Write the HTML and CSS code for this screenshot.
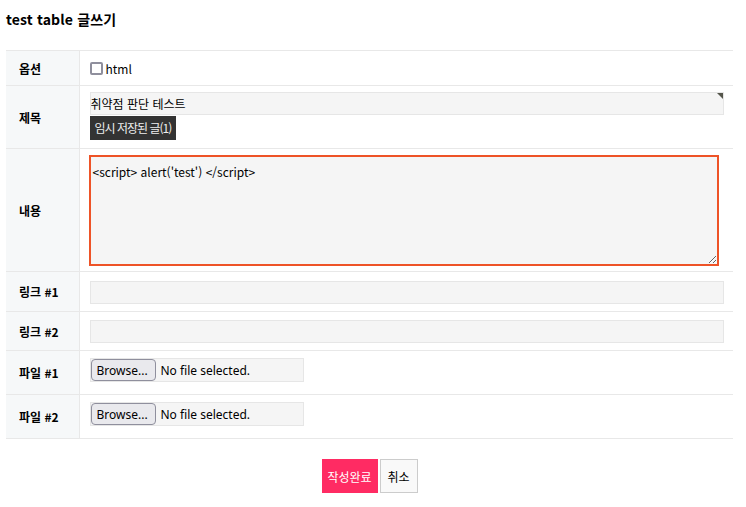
FILE: index.html
```html
<!DOCTYPE html>
<html lang="ko">
<head>
<meta charset="utf-8">
<title>test table 글쓰기</title>
<link rel="stylesheet" href="styles.css">
</head>
<body>
<div class="page">
  <h2 class="page-title">test table 글쓰기</h2>
  <form class="write-form">
    <table class="form-table">
      <tbody>
        <tr class="row-option">
          <th>옵션</th>
          <td>
            <label class="check-label"><input type="checkbox" class="check"><span>html</span></label>
          </td>
        </tr>
        <tr class="row-subject">
          <th>제목</th>
          <td>
            <div class="subject-wrap">
              <input type="text" class="text-input subject-input" value="취약점 판단 테스트">
              <span class="corner"></span>
            </div>
            <div class="autosave">임시 저장된 글(1)</div>
          </td>
        </tr>
        <tr class="row-content">
          <th>내용</th>
          <td>
            <textarea class="content-area">&lt;script&gt; alert('test') &lt;/script&gt;</textarea>
          </td>
        </tr>
        <tr class="row-link1">
          <th>링크 #1</th>
          <td><input type="text" class="text-input"></td>
        </tr>
        <tr class="row-link2">
          <th>링크 #2</th>
          <td><input type="text" class="text-input"></td>
        </tr>
        <tr class="row-file">
          <th>파일 #1</th>
          <td>
            <div class="file-box"><span class="file-btn">Browse...</span><span class="file-name">No file selected.</span></div>
          </td>
        </tr>
        <tr class="row-file">
          <th>파일 #2</th>
          <td>
            <div class="file-box"><span class="file-btn">Browse...</span><span class="file-name">No file selected.</span></div>
          </td>
        </tr>
      </tbody>
    </table>
    <div class="actions">
      <button type="button" class="btn-submit">작성완료</button>
      <button type="button" class="btn-cancel">취소</button>
    </div>
  </form>
</div>
</body>
</html>
```

FILE: styles.css
```css
* { box-sizing: border-box; }

html, body {
  margin: 0;
  padding: 0;
  background: #fff;
}

body {
  font-family: "Noto Sans CJK KR", "Noto Sans", sans-serif;
  font-size: 12px;
  color: #000;
}

.page {
  width: 727px;
  margin-left: 6px;
}

.page-title {
  margin: 0;
  padding-top: 8px;
  height: 50px;
  font-size: 14px;
  line-height: 22px;
  font-weight: 700;
  color: #000;
  letter-spacing: 0.15px;
}

.form-table {
  width: 727px;
  table-layout: fixed;
  border-collapse: collapse;
  border-top: 1px solid #e8e8e8;
}

.form-table tr {
  border-bottom: 1px solid #e8e8e8;
}

.form-table th {
  width: 73px;
  background: #f6f8f9;
  border-right: 1px solid #e8e8e8;
  text-align: left;
  padding: 0 0 0 13px;
  font-size: 12px;
  font-weight: 700;
  vertical-align: middle;
}

.form-table td {
  padding: 0 10px;
  vertical-align: middle;
}

.row-option td { height: 35px; }
.row-subject td { padding-top: 6px; padding-bottom: 8px; }
.row-content td { padding-top: 6px; padding-bottom: 5px; }
.row-link1 td { padding-top: 9px; padding-bottom: 7px; }
.row-link2 td { padding-top: 8px; padding-bottom: 7px; }
.row-file td { padding-top: 7px; padding-bottom: 12px; }

.check-label {
  display: flex;
  align-items: center;
  line-height: 19px;
  font-size: 12px;
}

.check {
  appearance: none;
  -webkit-appearance: none;
  margin: 0 3px 0 0;
  width: 13px;
  height: 13px;
  border: 2px solid #8f8f9d;
  border-radius: 2px;
  background: #fff;
}

.text-input {
  display: block;
  width: 634px;
  height: 23px;
  margin: 0;
  padding: 0 1px;
  border: 1px solid #e6e6e6;
  background: #f5f5f5;
  font: inherit;
  font-size: 12px;
  color: #000;
  outline: none;
}

.subject-input {
  padding: 0;
}

.subject-wrap {
  position: relative;
  width: 634px;
}

.corner {
  position: absolute;
  top: 1px;
  right: 1px;
  width: 0;
  height: 0;
  border-top: 6px solid #55564c;
  border-left: 6px solid transparent;
}

.autosave {
  display: inline-block;
  margin-top: 1px;
  padding: 0 5px;
  height: 24px;
  line-height: 24px;
  background: #333;
  color: #eee;
  font-size: 12px;
  letter-spacing: -1px;
}

.content-area {
  display: block;
  width: 630px;
  height: 111px;
  margin: 0 0 0 -1px;
  padding: 6px 2px;
  border: 2px solid #ee5327;
  background: #f5f5f5;
  font: inherit;
  font-size: 12px;
  line-height: 17px;
  color: #000;
  outline: none;
  resize: vertical;
}

.file-box {
  display: flex;
  align-items: center;
  width: 214px;
  height: 24px;
  border: 1px solid #e6e6e6;
  background: #f5f5f5;
  font-family: "Noto Sans", sans-serif;
  font-size: 12px;
}

.file-btn {
  display: inline-flex;
  align-items: center;
  width: 65px;
  height: 22px;
  padding: 0 5px;
  margin-right: 5px;
  border: 1px solid #8f8f9d;
  border-radius: 4px;
  background: #e9e9ed;
  color: #000;
}

.file-name {
  color: #000;
}

.actions {
  display: flex;
  justify-content: center;
  gap: 2px;
  margin-top: 20px;
}

.btn-submit,
.btn-cancel {
  height: 34px;
  margin: 0;
  font: inherit;
  font-size: 12px;
  cursor: pointer;
}

.btn-submit {
  width: 56px;
  padding: 0;
  border: 0;
  background: #ff2b63;
  color: #fff;
}

.btn-cancel {
  width: 38px;
  padding: 0;
  border: 1px solid #ccc;
  background: #f9f9f9;
  color: #000;
}
```
